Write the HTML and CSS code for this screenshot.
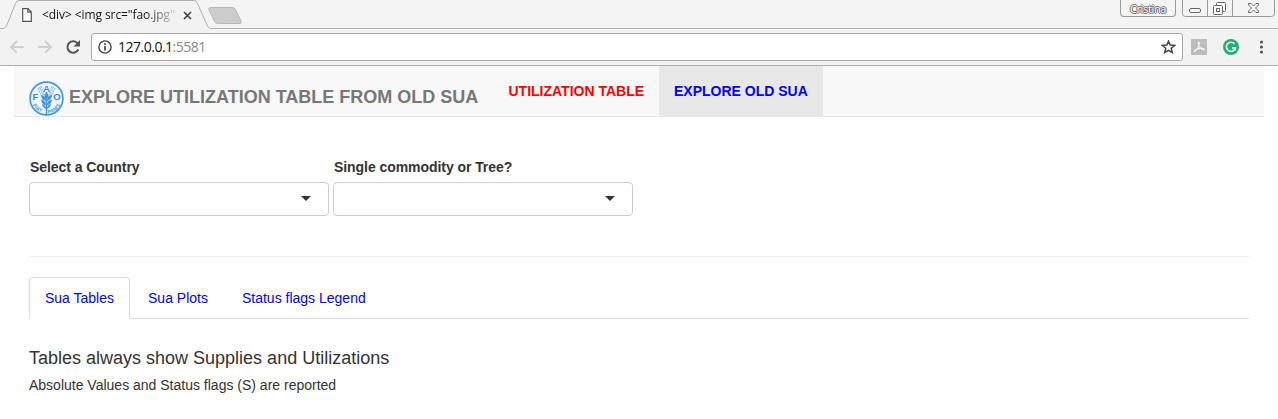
FILE: index.html
```html
<!DOCTYPE html>
<html lang="en">
<head>
<meta charset="utf-8">
<title>Explore utilization table</title>
<link rel="stylesheet" href="styles.css">
</head>
<body>
<header class="browser">
  <div class="tabstrip">
    <div class="tab">
      <svg class="tab-shape" width="250" height="29" viewBox="0 0 250 29">
        <path d="M0 28.500H3Q5.500 28.500 6.500 26L15.500 3.500Q16.500 .5 19 .5H194Q196.500 .5 197.500 3.500L207.500 26Q208.500 28.500 211 28.500H250V29H0Z" fill="#f2f2f2"/>
        <path d="M0 28.500H3Q5.500 28.500 6.500 26L15.500 3.500Q16.500 .5 19 .5H194Q196.500 .5 197.500 3.500L207.500 26Q208.500 28.500 211 28.500H250" fill="none" stroke="#b0b0b0"/>
        <path d="M4.500 28.500H210" stroke="#f2f2f2"/>
        <path d="M210.500 7.500H232Q234.500 7.500 235.500 9.500L241 21Q242 23.500 240 23.500H217.500Q215.500 23.500 214.500 21.500L209 10Q208 7.500 210.500 7.500Z" fill="#cdcdcd" stroke="#b8b8b8"/>
      </svg>
      <svg class="page-icon" width="10" height="14" viewBox="0 0 10 14"><path d="M.7.7H6L9.300 4V13.300H.7ZM5.800.7V4.200H9.300" fill="#fff" stroke="#555" stroke-width="1.200"/></svg>
      <span class="tab-title">&lt;div&gt; &lt;img src="fao.jpg"</span>
      <svg class="tab-close" width="9" height="9" viewBox="0 0 9 9"><path d="M1 1L8 8M8 1L1 8" stroke="#444" stroke-width="1.700"/></svg>
    </div>
    <div class="window-controls">
      <span class="profile">Cristina</span>
      <svg width="93" height="18" viewBox="0 0 93 18" fill="none">
        <path d="M.5 0V13.500Q.5 16.500 3.500 16.500H89.500Q92.500 16.500 92.500 13.500V0M25.500 0V16M50.500 0V16" stroke="#999"/>
        <rect x="7.500" y="8.500" width="11" height="4" rx="1.500" fill="#fff" stroke="#666"/>
        <path d="M34.500 5.500V3.500Q34.500 2.500 35.500 2.500H42.500Q43.500 2.500 43.500 3.500V10.500Q43.500 11.500 42.500 11.500H40.500" fill="#fff" stroke="#666"/>
        <rect x="31.500" y="5.500" width="9" height="9" rx="1" fill="#fff" stroke="#666"/>
        <rect x="34.500" y="8.500" width="3" height="3" stroke="#666"/>
        <path d="M66.500 3.500H69L71.500 6L74 3.500H76.500V5L73.500 8L76.500 11V12.500H74L71.500 10L69 12.500H66.500V11L69.500 8L66.500 5Z" fill="#fff" stroke="#666"/>
      </svg>
    </div>
  </div>
  <div class="toolbar">
    <svg class="nav-icons" width="75" height="16" viewBox="0 0 75 16" fill="none">
      <path d="M16 8H3M9 2L3 8L9 14M30 8H43M37 2L43 8L37 14" stroke="#d0d0d0" stroke-width="1.800"/>
      <path d="M70.300 10.500A5.700 5.700 0 1 1 69.200 4L70.700 5.500" stroke="#555" stroke-width="2"/>
      <path d="M72 1V7.500H65.500Z" fill="#555"/>
    </svg>
    <div class="address">
      <svg width="14" height="14" viewBox="0 0 14 14"><circle cx="7" cy="7" r="6.100" fill="none" stroke="#444" stroke-width="1.400"/><path d="M7 6V10.500M7 3.300V4.900" stroke="#444" stroke-width="1.700"/></svg>
      <span class="url">127.0.0.1<span class="port">:5581</span></span>
      <svg class="star" width="15" height="14" viewBox="0 0 15 14"><path d="M7.500 1.200L9.200 5.100L13.600 5.500L10.300 8.300L11.300 12.500L7.500 10.300L3.700 12.500L4.700 8.300L1.400 5.500L5.800 5.100Z" fill="#fff" stroke="#444" stroke-width="1.500"/></svg>
    </div>
    <svg class="extensions" width="76" height="16" viewBox="0 0 76 16" fill="none">
      <rect width="16" height="16" fill="#bcbcbc"/>
      <path d="M7.600 3C8.800 2.800 8.500 6 7 8.500C5.500 11 3.800 13.200 3.200 12.500C2.700 11.500 6 9.700 9 9.400C12 9.100 13.600 9.800 13 10.500C11.800 11.300 9 9 8 6.800C7.400 5.200 7 3.300 7.600 3Z" stroke="#f3f3f3" stroke-width="1.100"/>
      <circle cx="40" cy="8" r="8" fill="#1db36f"/>
      <path d="M43.300 4.800A4.500 4.500 0 1 0 44.300 9H41M44.300 8.400V11.500" stroke="#fff" stroke-width="1.600"/>
      <g fill="#555"><circle cx="70.500" cy="3" r="1.600"/><circle cx="70.500" cy="8" r="1.600"/><circle cx="70.500" cy="13" r="1.600"/></g>
    </svg>
  </div>
</header>
<nav class="navbar">
  <div class="brand">
    <svg class="logo" width="36" height="36" viewBox="0 0 36 36">
      <circle cx="18.500" cy="18.500" r="16.400" fill="#eef6fd" stroke="#4796dc" stroke-width="1.700"/>
      <path d="M10 8L16 22M13 6L17 18M27 8L21 22M24 6L20 18M11.500 7L17 20M25.500 7L20 20" stroke="#7db6e8" stroke-dasharray="2 .7"/>
      <path d="M18.500 12V34.500" stroke="#4796dc" stroke-width="1.500"/>
      <path transform="translate(.5 1)" d="M18 11C15.500 14 15.500 16 18 18C20.500 16 20.500 14 18 11ZM12.500 14Q17.500 15 17.700 20Q13 19 12.500 14ZM23.500 14Q18.500 15 18.300 20Q23 19 23.500 14ZM12.500 18.500Q17.500 19.500 17.700 24.500Q13 23.500 12.500 18.500ZM23.500 18.500Q18.500 19.500 18.300 24.500Q23 23.500 23.500 18.500ZM13.500 23Q17.500 24 17.700 28Q14 27 13.500 23ZM22.500 23Q18.500 24 18.300 28Q22 27 22.500 23Z" fill="#4796dc"/>
      <g class="logo-letters"><text x="7.500" y="19.500">F</text><text x="18.500" y="12">A</text><text x="29" y="19.500">O</text></g>
      <path id="motto-left" d="M4.500 24A15 15 0 0 0 18 33.500" fill="none"/>
      <path id="motto-right" d="M20 33.500A15 15 0 0 0 33 23" fill="none"/>
      <text class="motto"><textPath href="#motto-left" startOffset="1">FIAT</textPath></text>
      <text class="motto"><textPath href="#motto-right">PANIS</textPath></text>
    </svg>
    <span class="brand-name">EXPLORE UTILIZATION TABLE FROM OLD SUA</span>
  </div>
  <a class="nav-link red">UTILIZATION TABLE</a>
  <a class="nav-link active">EXPLORE OLD SUA</a>
</nav>
<main class="content">
  <div class="filters">
    <div class="field"><label>Select a Country</label><div class="select"><i class="caret"></i></div></div>
    <div class="field"><label>Single commodity or Tree?</label><div class="select"><i class="caret"></i></div></div>
  </div>
  <hr class="rule">
  <div class="tabs">
    <a class="tab-link current">Sua Tables</a>
    <a class="tab-link">Sua Plots</a>
    <a class="tab-link">Status flags Legend</a>
  </div>
  <h4 class="heading">Tables always show Supplies and Utilizations</h4>
  <p class="note">Absolute Values and Status flags (S) are reported</p>
</main>
</body>
</html>
```
FILE: styles.css
```css
* { box-sizing: border-box; }
body { margin: 0; background: #fff; color: #333; font: 14px/20px "Liberation Sans", Arial, sans-serif; overflow: hidden; }
svg { display: block; flex: none; }
.browser { font-family: "Open Sans", "Noto Sans", sans-serif; background: #f2f2f2; height: 66px; border-bottom: 1px solid #b0b0b0; }
.tabstrip { display: flex; justify-content: space-between; height: 29px; background: #f4f4f4; border-bottom: 1px solid #b0b0b0; }
.tab { position: relative; display: flex; align-items: center; width: 250px; height: 29px; padding: 1px 0 0 22px; }
.tab-shape { position: absolute; left: 0; top: 0; }
.page-icon, .tab-title, .tab-close { position: relative; }
.tab-title { width: 134px; margin-left: 10px; white-space: nowrap; font-size: 12px; letter-spacing: -.08px; color: transparent; background: linear-gradient(90deg, #111 77%, #11111130 98%); background-clip: text; -webkit-background-clip: text; }
.tab-close { margin-left: 7px; }
.window-controls { display: flex; align-items: flex-start; gap: 6px; margin-right: 3px; }
.profile { width: 56px; height: 17px; border: 1px solid #999; border-top: 0; border-radius: 0 0 4px 4px; text-align: center; font-size: 11px; line-height: 17px; letter-spacing: -.35px; color: #fff; text-shadow: 1px 0 #666, -1px 0 #666, 0 1px #666, 0 -1px #666; }
.toolbar { display: flex; align-items: center; height: 36px; padding-left: 8px; }
.address { display: flex; align-items: center; width: 1092px; height: 28px; margin-left: 8px; padding: 0 6px; border: 1px solid #a9a9a9; border-radius: 3px; background: #fff; }
.url { margin-left: 6px; font-size: 14px; letter-spacing: -.5px; color: #111; }
.port { color: #888; }
.star { margin-left: auto; }
.extensions { margin-left: 8px; }
.navbar { display: flex; height: 51px; margin: 0 14px; background: #f8f8f8; border-bottom: 1px solid #e7e7e7; font-weight: bold; }
.brand { display: flex; width: 479px; padding: 14px 0 0 14px; }
.logo-letters { font-size: 9.500px; font-weight: bold; fill: #3a8cd8; text-anchor: middle; }
.motto { font-size: 5px; letter-spacing: .2px; fill: #4796dc; }
.brand-name { margin: 7px 0 0 5px; font-size: 18px; color: #777; white-space: nowrap; }
.nav-link { height: 50px; padding: 15px; color: blue; white-space: nowrap; }
.red { width: 166px; padding-left: 15.500px; color: red; }
.nav-link.active { width: 164px; background: #e7e7e7; }
.content { padding: 40px 29px 0; }
.filters { display: flex; gap: 4px; }
.field { width: 300px; }
.field label { display: block; height: 25px; padding-left: 1px; font-weight: bold; letter-spacing: -.06px; }
.select { display: flex; align-items: center; justify-content: flex-end; height: 34px; padding: 0 17px 2px 0; border: 1px solid #ccc; border-radius: 4px; }
.caret { border: 5px solid transparent; border-top-color: #333; border-bottom: 0; }
.rule { height: 1px; margin: 40px 0 20px; border: 0; background: #eee; }
.tabs { display: flex; gap: 2px; height: 42px; border-bottom: 1px solid #ddd; }
.tab-link { height: 42px; padding: 11px 16px; color: blue; }
.tab-link.current { border: 1px solid #ddd; border-bottom-color: #fff; border-radius: 4px 4px 0 0; padding: 10px 15px; }
.heading { margin: 29px 0 7px; font-size: 18px; line-height: 20px; font-weight: normal; }
.note { margin: 0; }
```
